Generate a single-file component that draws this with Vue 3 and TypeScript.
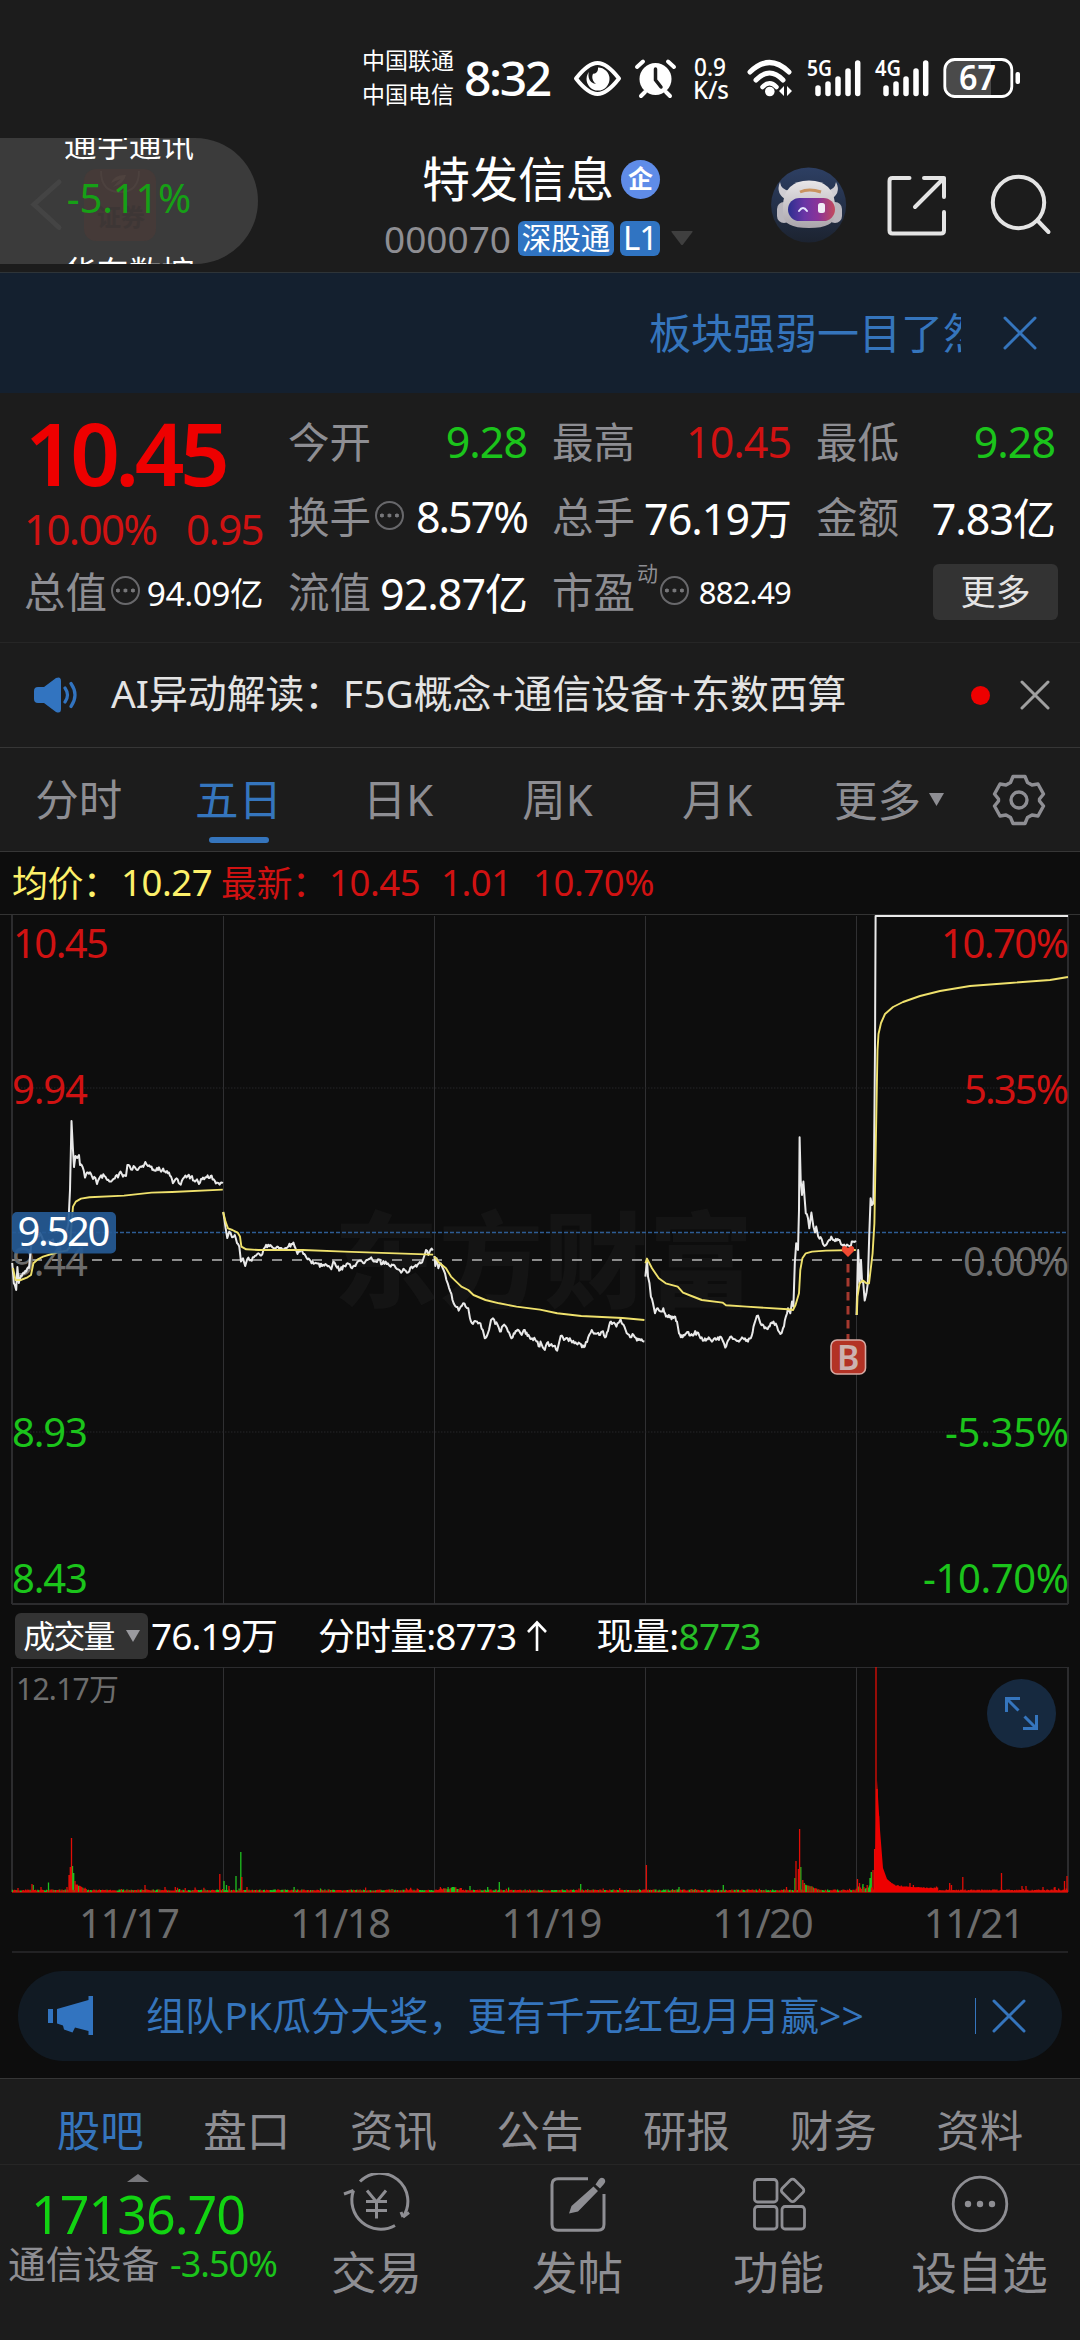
<script setup lang="ts">
type Point = [number, number]

interface Bar {
  x: number
  h: number
  up: boolean
}

const dayEdges = [12, 223.2, 434.4, 645.6, 856.8, 1068]
const days = ['11/17', '11/18', '11/19', '11/20', '11/21']

const periodTabs = ['分时', '五日', '日K', '周K', '月K']
const sectionTabs = ['股吧', '盘口', '资讯', '公告', '研报', '财务', '资料']

/* Small repeatable generator, so that the fine ticks are the same on each load. */
function createNoise(seed: number) {
  let state = seed
  return () => {
    state = (state * 1664525 + 1013904223) % 4294967296
    return state / 4294967296
  }
}

function toPath(points: Point[]): string {
  return points.map(([x, y], i) => `${i ? 'L' : 'M'}${x.toFixed(1)} ${y.toFixed(1)}`).join('')
}

/* Adds minute-level ticks between the recorded turning points. */
function withTicks(points: Point[], seed: number): string {
  const rand = createNoise(seed)
  const out: Point[] = []
  points.forEach((p, i) => {
    out.push(p)
    const next = points[i + 1]
    if (!next) return
    const gap = next[0] - p[0]
    if (gap > 2 && Math.abs(next[1] - p[1]) < 12 && next[0] < 870) {
      const steps = Math.floor(gap / 0.9)
      for (let k = 1; k < steps; k++) {
        const t = k / steps
        out.push([p[0] + gap * t, p[1] + (next[1] - p[1]) * t + (rand() - 0.5) * 4.2])
      }
    }
  })
  return toPath(out)
}

const priceByDay: Point[][] = [
  [[12.2, 1263], [13.8, 1283], [16.2, 1290], [17.4, 1267], [18.8, 1283], [20.7, 1276], [29, 1268], [31, 1247], [32, 1241], [36, 1240], [40, 1233], [43, 1240], [48, 1243], [52, 1240], [56, 1246], [62, 1240], [66, 1235], [68.4, 1224], [70, 1190], [71.5, 1121], [72.8, 1147], [74, 1167], [75.4, 1156], [77.2, 1158], [79, 1155], [80, 1165], [82.6, 1167], [85, 1177.6], [88, 1172.6], [91, 1174], [93, 1179], [95.4, 1178], [97, 1184], [100, 1177], [104.4, 1176], [107.4, 1180], [112, 1180.6], [115.7, 1176], [118, 1177.5], [120.5, 1171.6], [123, 1176.6], [126, 1176], [127.4, 1165], [131, 1169.5], [133.6, 1166], [137.8, 1170], [140.5, 1166.6], [143.3, 1167], [145.3, 1162], [148, 1166], [151.5, 1166.6], [154.3, 1170.6], [157, 1168], [160, 1170], [163.2, 1168.6], [166, 1172.6], [169, 1172.6], [172.9, 1183.3], [175.6, 1179], [180.8, 1184.6], [184.2, 1177.3], [187.7, 1176], [191, 1176.6], [195, 1181.6], [197, 1179.3], [199, 1184], [203, 1177.6], [206.6, 1177.3], [210.7, 1176], [213.5, 1179.3], [217, 1182.6], [219.7, 1184.6], [222.8, 1183.3]],
  [[223.2, 1212], [224.5, 1220], [225.6, 1228], [227.3, 1238], [229.3, 1231.6], [232, 1237.3], [234.8, 1235], [237, 1243], [239.3, 1246.6], [241, 1261.6], [243, 1258.3], [245.2, 1266], [247.2, 1259.3], [250.7, 1260], [254.8, 1256], [258.3, 1253.3], [262.4, 1254], [265, 1247.3], [270.3, 1245], [273.8, 1248.3], [277.2, 1246.6], [282.4, 1249.3], [287.5, 1247.3], [291.3, 1244], [293.4, 1242.6], [295.5, 1248.3], [297.5, 1254], [301, 1250], [304.4, 1254], [307.5, 1259.3], [311.6, 1263.3], [316.8, 1263.3], [322, 1266], [325.4, 1264], [328.9, 1266], [331.3, 1269.3], [333.3, 1261.6], [336, 1266], [340.2, 1270], [344.4, 1266], [347.8, 1263.3], [352, 1268.3], [355.4, 1266], [359.8, 1260.6], [363.3, 1263.3], [368.5, 1259.3], [371.2, 1257.3], [374.6, 1261.6], [378, 1259.3], [382.2, 1264], [385.7, 1261.6], [389.8, 1266], [392.6, 1265], [397.7, 1269.3], [401.2, 1272.6], [404.6, 1270], [408, 1272.6], [411.5, 1266.6], [416.7, 1266.6], [420.8, 1263.3], [423.5, 1258.3], [426, 1250], [428.4, 1255], [430.4, 1250], [432.8, 1250.6]],
  [[434.4, 1256], [435.3, 1266], [436.6, 1258.3], [438.4, 1268.3], [440.8, 1263.3], [442.8, 1268.3], [445, 1273.3], [447.7, 1283.3], [450.4, 1291.6], [452.5, 1300], [455.2, 1306], [458.7, 1310.6], [460.7, 1306.6], [463.2, 1303.3], [465.6, 1306.6], [468.3, 1308.3], [470, 1318.3], [473, 1324], [477, 1321.6], [480.4, 1323.3], [482.8, 1330], [484.8, 1338.3], [487.3, 1335], [489, 1330], [491, 1320], [493, 1318.3], [495.2, 1324], [497.6, 1325], [500, 1331.6], [502.8, 1326], [505.5, 1326], [508, 1331.6], [511.4, 1338.3], [513.8, 1333.3], [518.3, 1330], [521.7, 1335], [524.8, 1330], [527.5, 1336], [532, 1338.3], [535.5, 1340], [539.6, 1346.6], [540.5, 1341.6], [542.8, 1347.3], [544.8, 1350], [546.9, 1343.3], [550.3, 1345], [553.8, 1346], [557.2, 1350.6], [560.7, 1336], [564, 1340], [567.5, 1338.3], [571, 1340.6], [574.4, 1343.3], [578.6, 1342.6], [582, 1347.3], [584.8, 1346.6], [588.2, 1337.3], [591.7, 1330], [595, 1333.3], [599.2, 1335], [602, 1331.6], [606, 1336.6], [608.9, 1326.6], [611, 1321.6], [614, 1322.6], [616.4, 1326.6], [620.6, 1319.3], [624.4, 1326.6], [626.8, 1333.3], [630.2, 1337.3], [633.7, 1335.3], [637, 1340.6], [641.6, 1339.3], [644.4, 1341.6]],
  [[645.4, 1276.6], [647, 1259.3], [648, 1276.6], [649.5, 1283.3], [650.9, 1296.6], [653, 1303.3], [655, 1313.3], [657.8, 1308.3], [661.2, 1311.6], [663.3, 1308.3], [666, 1316.6], [668.8, 1315], [671.5, 1319.3], [674.3, 1316.6], [677, 1321.6], [679, 1333.3], [682.6, 1337.3], [686.3, 1333.3], [691.5, 1334], [697, 1332.6], [700.5, 1338.3], [704, 1340.6], [708.7, 1337.3], [712.9, 1340.6], [717, 1339.3], [721.8, 1338.3], [725.3, 1347.6], [728, 1340.6], [731.5, 1336.6], [735, 1339.3], [739, 1341.6], [743, 1338.3], [748, 1341.6], [750.7, 1338.3], [753.5, 1326.6], [755.6, 1320], [758, 1315.6], [760.4, 1323.3], [764.5, 1328.3], [768.7, 1326.6], [773.5, 1321.6], [777, 1326.6], [780.4, 1334], [783, 1328.3], [785.9, 1316.6], [788, 1308.3], [790.3, 1313.3], [792, 1301.6], [793.4, 1306.6], [794.8, 1263.3], [796.2, 1243.3], [798, 1250], [799, 1210], [799.6, 1137.3], [800.7, 1180], [802, 1195], [803.4, 1181.6], [804.5, 1196.6], [805.8, 1213.3], [808, 1218.3], [809.3, 1228.3], [811.4, 1212.6], [813.4, 1226.6], [815, 1232.6], [816.2, 1226.6], [818.2, 1236.6], [821.7, 1239.3], [824.4, 1246], [827.9, 1241.6], [831.3, 1236.6], [834, 1240], [836.8, 1240.6], [839.6, 1240], [842.3, 1245], [845, 1246.6], [850, 1246], [852.7, 1241.6], [855.8, 1240.6]],
  [[856.5, 1315], [858.2, 1250], [859.6, 1283.3], [861, 1260], [862, 1280], [863.3, 1283.3], [864.7, 1300.6], [866.4, 1293.3], [867.8, 1283.3], [869.2, 1236.6], [870.6, 1198.3], [872, 1205], [873.3, 1203.3], [874, 1160], [875, 1050], [875.6, 916], [1068, 916]],
]

const averageByDay: Point[][] = [
  [[13, 1268], [15.5, 1280], [20.7, 1280], [27.5, 1277.3], [31, 1275], [33.4, 1263.3], [37.9, 1259.3], [43, 1256.6], [51.6, 1254], [60, 1251.6], [67, 1250.6], [70, 1246.6], [71.6, 1223.3], [73, 1206.6], [75.8, 1201.6], [81, 1198.6], [89.5, 1197.3], [124, 1195.6], [151.5, 1192.6], [172, 1192], [222.8, 1189.6]],
  [[223.2, 1212], [225.5, 1221.6], [228, 1228.3], [232.4, 1230], [237.6, 1232.6], [240, 1236.6], [241.4, 1246.6], [246.2, 1249.3], [258.3, 1250], [303, 1250], [344.4, 1251.6], [433.2, 1254.6]],
  [[434.4, 1256.6], [439, 1262.6], [446, 1268.3], [451, 1276.6], [461.4, 1286.6], [468.3, 1290], [473.5, 1295], [485.5, 1300], [499.3, 1303.3], [516.5, 1306.6], [540, 1309.6], [557.2, 1313.3], [581.3, 1316], [622.6, 1318], [644.4, 1320]],
  [[645.4, 1263.3], [647, 1258.6], [652, 1268.3], [658.8, 1278.3], [665.7, 1283.3], [677.7, 1286.6], [683, 1292.6], [691.5, 1296], [701.8, 1300], [722.5, 1302.6], [726, 1305.3], [746.6, 1306.6], [788, 1309.3], [793, 1310], [795.5, 1305], [799, 1293.3], [800.3, 1270], [802.4, 1258.3], [805.8, 1253.3], [812, 1251.6], [825.8, 1250.6], [855.8, 1250]],
  [[856.8, 1315], [857.5, 1296.6], [859.6, 1283.3], [863, 1280.6], [866.4, 1283.3], [869, 1283.3], [870.6, 1270], [872.6, 1253.3], [874.4, 1223.3], [875.7, 1150], [877.5, 1050], [878.5, 1034], [881, 1023], [885, 1014], [893, 1007], [903, 1002], [920, 996], [940, 991], [970, 986], [1010, 983], [1050, 980], [1068, 977]],
]

const pricePaths = priceByDay.map((points, i) => withTicks(points, 17 + i * 31))
const averagePaths = averageByDay.map(toPath)

const volumeBase = 1892

function buildVolume(): Bar[] {
  const rand = createNoise(90210)
  const bars: Bar[] = []
  for (let x = 12.5; x < 1068; x += 1.1) {
    const lastDay = x > 874
    const r = rand()
    let h = 1.5 + (r > 0.93 ? rand() * 3.5 : rand() * 1)
    if (x > 76 && x < 87) h += 6 * (1 - (x - 76) / 11)
    if (x > 436 && x < 462) h += 3.5 * rand()
    if (x > 804 && x < 820) h += 6 * (1 - (x - 804) / 16)
    if (x > 857 && x < 872) h += 6 * rand()
    if (lastDay) h += 18 * Math.exp(-(x - 880) / 8) * (x > 880 ? 1 : 0) + (x < 938 ? 3 * (0.6 + rand() * 0.4) : 0)
    bars.push({ x, h, up: lastDay || rand() > 0.42 })
  }
  const peaks: [number, number, boolean][] = [
    [32, 8, true], [33.2, 7, false], [41, 5, true], [48.5, 9.5, false], [67, 5, true], [69, 17, true], [70.3, 25, true],
    [71.5, 54, true], [72.5, 26, false], [73.7, 19, false], [75, 11, true], [145, 7, true], [165, 5, true],
    [219.8, 18, true], [224, 11, false], [226.5, 7, false], [229, 6, true], [236, 16, false], [240.8, 40, false], [241.8, 15, true],
    [247, 5, true], [470, 6, false], [499.3, 10, false], [580.7, 8, false], [646.4, 27, true], [679, 5, false], [723.3, 7, false],
    [786.5, 5, true], [795, 14, false], [796, 31, true], [798.4, 23, true], [799.6, 63, true], [800.8, 25, false], [802.8, 12, true], [804.3, 9, false],
    [857.5, 13, true], [859.5, 9, true], [863, 8, false], [870, 14, false], [871.3, 20, false], [873, 22, true], [874.6, 43, true], [876, 225, true], [877.2, 103, true],
    [878.6, 76, true], [879.8, 50, true], [881.2, 28, true], [910, 9, true], [949.7, 9, true], [951.5, 7, true], [962.8, 15, true], [1001.5, 19, true],
    [1022, 6, true], [1026, 6, true], [1043, 5, true], [1055, 5, true], [1064.5, 11, true], [1067, 16, true],
  ]
  peaks.forEach(([x, h, up]) => bars.push({ x, h, up }))
  return bars
}

const volume = buildVolume()
const barPath = (up: boolean) =>
  volume.filter((b) => b.up === up).map((b) => `M${b.x.toFixed(1)} ${volumeBase}V${(volumeBase - b.h).toFixed(1)}`).join('')
const risePath = barPath(true)
const fallPath = barPath(false)
</script>

<template>
  <div class="screen">
    <header class="status">
      <div class="carriers"><span>中国联通</span><span>中国电信</span></div>
      <div class="clock">8:32</div>
      <svg class="status-icons" viewBox="560 40 520 76" width="520" height="76">
        <path d="M576 78.5C585 67 591 63 597.500 63S610 67 619 78.500C610 90 604 94 597.500 94S585 90 576 78.500Z" fill="none" stroke="#fff" stroke-width="4" stroke-linejoin="round" />
        <path d="M598 67.500a11.500 11.500 0 1 1-11.500 11.500c0-4 2-7 4-8.500c1 5 8 4 7.500-3Z" fill="#fff" />
        <path d="M596 70c-5 4-5 10 0 14c-8-1-9-10-6-15Z" fill="#1c1c1c" />
        <circle cx="655.500" cy="79" r="16" fill="#fff" />
        <path d="M637 67l6-5.500M674 67l-6-5.500M645 92l-4 4M666 92l4 4" stroke="#fff" stroke-width="4" stroke-linecap="round" />
        <path d="M655.500 69v11l5.500 7" fill="none" stroke="#1c1c1c" stroke-width="3.500" stroke-linecap="round" />
        <text x="694" y="76" textLength="32" lengthAdjust="spacingAndGlyphs" font-size="26" font-weight="500">0.9</text>
        <text x="693" y="98.500" textLength="36" lengthAdjust="spacingAndGlyphs" font-size="25" font-weight="500">K/s</text>
        <g fill="none" stroke="#fff" stroke-width="5" stroke-linecap="round">
          <path d="M750 72Q769.500 53 789 72" />
          <path d="M756 80Q769.500 66 783 80" />
          <path d="M762.500 87Q769.500 79.500 776.500 87" stroke-width="4.500" />
        </g>
        <circle cx="769.800" cy="91.500" r="4.800" fill="#fff" />
        <path d="M784 86v10l-5-5ZM787 86l5 5-5 5Z" fill="#fff" />
        <text x="807" y="76" textLength="25" lengthAdjust="spacingAndGlyphs" font-size="22" font-weight="600">5G</text>
        <text x="875" y="76" textLength="26" lengthAdjust="spacingAndGlyphs" font-size="22" font-weight="600">4G</text>
        <g stroke="#fff" stroke-width="5.500" stroke-linecap="round">
          <path d="M818 88V93.500M828 84V93.500M838 79V93.500M848 71V93.500M857.700 63V93.500" />
          <path d="M886 88V93.500M896 84V93.500M906 79V93.500M916 71V93.500M925.700 63V93.500" />
        </g>
        <path d="M954 61h37v34.500h-37a8 8 0 0 1-8-8V69a8 8 0 0 1 8-8Z" fill="#4a4a4a" />
        <rect x="944.800" y="59.500" width="67" height="37" rx="10" fill="none" stroke="#fff" stroke-width="2.800" />
        <rect x="1015.500" y="72" width="4.500" height="12" rx="2" fill="#fff" />
        <text x="959" y="90" textLength="37" lengthAdjust="spacingAndGlyphs" font-size="34" font-weight="600">67</text>
      </svg>
    </header>

    <nav class="titlebar">
      <div class="pill">
        <svg class="ghost" viewBox="0 138 258 126" width="258" height="126">
          <path d="M59 182L34 204.500L59 227.500" fill="none" stroke="#444" stroke-width="5" stroke-linecap="round" />
          <rect x="84" y="169" width="72" height="72" rx="12" fill="#453a38" />
          <path d="M101 171q0 21 19 21t19-21" fill="none" stroke="#4c413e" stroke-width="2" />
          <path d="M111 183q4-9 15-8q-2 9-13 12q5-6 8-8q-6 2-10 4Z" fill="#4e423e" />
          <text x="97" y="226" font-size="24" font-weight="700" fill="#3d3635">证券</text>
        </svg>
        <div class="ticker">
          <span>通宇通讯</span>
          <span class="ticker-change">-5.11%</span>
          <span>华东数控</span>
        </div>
      </div>
      <div class="stock">
        <div class="name-row">
          <span class="name">特发信息</span><span class="corp">企</span>
        </div>
        <div class="code-row">
          <span class="code">000070</span><span class="tag">深股通</span><span class="tag level">L1</span>
          <svg viewBox="0 0 22 14" width="22" height="14"><path d="M1 0h20q1 0 .5 1L12 13.500q-1 1-2 0L.5 1Q0 0 1 0Z" fill="#3f3f3f" /></svg>
        </div>
      </div>
      <div class="actions">
        <svg viewBox="771 167 76 76" width="76" height="76">
          <defs>
            <linearGradient id="visor" x1="0" x2="1"><stop offset="0" stop-color="#2b2f8f" /><stop offset=".35" stop-color="#6a35a5" /><stop offset=".65" stop-color="#8b3398" /><stop offset="1" stop-color="#c34a5c" /></linearGradient>
            <linearGradient id="disc" x1="0" y1="0" x2="0" y2="1"><stop offset="0" stop-color="#2d3f63" /><stop offset="1" stop-color="#1c2330" /></linearGradient>
            <linearGradient id="helmet" x1="0" y1="0" x2="0" y2="1"><stop offset="0" stop-color="#e8e6e8" /><stop offset="1" stop-color="#aaa5ab" /></linearGradient>
          </defs>
          <circle cx="808.600" cy="205" r="37.500" fill="url(#disc)" />
          <path d="M787 200q-12-6-7-18q1 8 10 9ZM829 200q13-6 7-18q-1 8-10 9Z" fill="#cfcdd2" />
          <rect x="777" y="202" width="14" height="21" rx="7" fill="#b9b6bd" /><rect x="828" y="202" width="14" height="21" rx="7" fill="#b9b6bd" />
          <path d="M783 207q0-26 26-26.500q26 .5 26 26.500v7q0 14-26 14t-26-14Z" fill="url(#helmet)" />
          <rect x="788" y="198" width="47" height="23" rx="11.500" fill="url(#visor)" />
          <path d="M800 192q9-4 21 0" stroke="#c9935f" stroke-width="3" fill="none" />
          <path d="M799 211q4-6 8 0" stroke="#e5e4ff" stroke-width="2" fill="none" stroke-linecap="round" />
          <rect x="818" y="203" width="7" height="10" rx="2.500" fill="#f1ecf6" />
        </svg>
        <svg viewBox="885 175 63 62" width="63" height="62">
          <path d="M909.500 179h-17q-3 0-3 3v49.500q0 3 3 3h48.500q3 0 3-3v-18.500M924 179h20v19M944 179L915 208" fill="none" stroke="#e4e4e4" stroke-width="4" stroke-linecap="round" stroke-linejoin="round" />
        </svg>
        <svg viewBox="989 174 63 63" width="63" height="63">
          <circle cx="1018.500" cy="202.500" r="25.700" fill="none" stroke="#e4e4e4" stroke-width="4" />
          <path d="M1037.500 220.500L1048.500 232" stroke="#e4e4e4" stroke-width="4" stroke-linecap="round" />
        </svg>
      </div>
    </nav>

    <section class="promo">
      <div class="promo-text">板块强弱一目了然</div>
      <svg viewBox="0 0 34 34" width="34" height="34"><path d="M2 2L32 32M32 2L2 32" stroke="#3575bd" stroke-width="3" stroke-linecap="round" /></svg>
    </section>

    <section class="quote">
      <div class="col first">
        <div class="price">10.45</div>
        <div class="delta"><span>10.00%</span><span>0.95</span></div>
        <div class="cell"><label>总值</label><i class="info" /><b class="small">94.09亿</b></div>
      </div>
      <div class="col">
        <div class="cell"><label>今开</label><b class="fall">9.28</b></div>
        <div class="cell"><label>换手</label><i class="info" /><b class="tight">8.57%</b></div>
        <div class="cell"><label>流值</label><b>92.87亿</b></div>
      </div>
      <div class="col">
        <div class="cell"><label>最高</label><b class="rise">10.45</b></div>
        <div class="cell"><label>总手</label><b>76.19万</b></div>
        <div class="cell"><label>市盈</label><sup>动</sup><i class="info" /><b class="smaller">882.49</b></div>
      </div>
      <div class="col">
        <div class="cell"><label>最低</label><b class="fall">9.28</b></div>
        <div class="cell"><label>金额</label><b>7.83亿</b></div>
        <div class="cell end"><button class="more">更多</button></div>
      </div>
    </section>

    <section class="insight">
      <svg viewBox="34 676 44 36" width="44" height="36">
        <path d="M38 686h6l12-9q5-2 5 3v28q0 5-5 3l-12-9h-6q-4 0-4-4v-8q0-4 4-4Z" fill="#3274c0" />
        <path d="M65 687q5 7 0 14M71 682.500q8 11.500 0 23" fill="none" stroke="#3274c0" stroke-width="3.200" stroke-linecap="round" />
      </svg>
      <p>AI异动解读：F5G概念+通信设备+东数西算</p>
      <span class="dot" />
      <svg viewBox="0 0 30 30" width="30" height="30"><path d="M2 2L28 28M28 2L2 28" stroke="#a0a0a0" stroke-width="3" stroke-linecap="round" /></svg>
    </section>

    <nav class="periods">
      <div v-for="tab in periodTabs" :key="tab" class="period" :class="{ active: tab === '五日' }">{{ tab }}</div>
      <div class="period more-period">更多<svg viewBox="0 0 15 13" width="15" height="13"><path d="M0 0h15L7.500 13Z" fill="#8e8e93" /></svg></div>
      <div class="gear">
        <svg viewBox="-27 -27 54 54" width="54" height="54" fill="none" stroke="#8e8e93" stroke-width="3.400" stroke-linejoin="round">
          <path d="M-6 -23.500H6L8.500 -17.500L13 -15L19 -16L24.500 -6L20.500 -1V1L24.500 6L19 16L13 15L8.500 17.500L6 23.500H-6L-8.500 17.500L-13 15L-19 16L-24.500 6L-20.500 1V-1L-24.500 -6L-19 -16L-13 -15L-8.500 -17.500Z" />
          <circle r="8" />
        </svg>
      </div>
    </nav>

    <section class="readout">
      <span class="avg label">均价：</span><span class="avg v0">10.27</span>
      <span class="latest label">最新：</span><span class="latest v1">10.45</span><span class="latest v2">1.01</span><span class="latest">10.70%</span>
    </section>

    <svg class="chart" viewBox="0 914 1080 691" width="1080" height="691">
      <text x="334" y="1300" textLength="419" font-size="104" class="watermark">东方财富</text>
      <path d="M0 914.500H1080" stroke="#333" />
      <path d="M12 1604H1068M12 915V1604M1068 915V1604" stroke="#2c2c2e" stroke-width="2" fill="none" />
      <path v-for="x in dayEdges.slice(1, 5)" :key="x" :d="`M${Math.floor(x) + 0.5} 916V1604`" stroke="#303032" />
      <path d="M12 1088H1068M12 1432H1068" stroke="#262628" stroke-dasharray="1.500 1.500" />
      <path d="M12 1260H1068" stroke="#8c8c8c" stroke-width="2" stroke-dasharray="10 10" />
      <path d="M12 1232.500H1068" stroke="#2d5c94" stroke-width="1.300" stroke-dasharray="4 2" />
      <g class="axis left">
        <text x="13" y="957.500" class="rise" textLength="96">10.45</text>
        <text x="12" y="1103.500" class="rise" textLength="76">9.94</text>
        <text x="12" y="1275.500" class="flat" textLength="76">9.44</text>
        <text x="12" y="1447" class="fall" textLength="76">8.93</text>
        <text x="12" y="1593" class="fall" textLength="76">8.43</text>
      </g>
      <g class="axis right">
        <text x="1069" y="957.500" class="rise" textLength="128">10.70%</text>
        <text x="1069" y="1103.500" class="rise" textLength="105">5.35%</text>
        <text x="1069" y="1275.500" class="flat" textLength="106">0.00%</text>
        <text x="1069" y="1447" class="fall" textLength="124">-5.35%</text>
        <text x="1069" y="1593" class="fall" textLength="146">-10.70%</text>
      </g>
      <path v-for="(d, i) in pricePaths" :key="'p' + i" :d="d" class="line price-line" />
      <path v-for="(d, i) in averagePaths" :key="'a' + i" :d="d" class="line avg-line" />
      <rect x="12" y="1212" width="104" height="41.500" rx="5" fill="#265a95" fill-opacity=".93" />
      <text x="17.500" y="1245.500" textLength="93" font-size="40" fill="#fff">9.520</text>
      <path d="M848 1264V1340" stroke="#a5392f" stroke-width="3" stroke-dasharray="8.500 5.500" />
      <path d="M848 1257l-6-6q-1-5 3-5l3 2l3-2q4 0 3 5Z" fill="#f04a32" />
      <rect x="831" y="1340" width="34.500" height="34" rx="6" fill="#b33225" stroke="#d6aaa4" stroke-width="1.600" />
      <text x="848.200" y="1369.500" text-anchor="middle" font-size="34" font-weight="600" fill="#ccb2b0">B</text>
    </svg>

    <section class="volume-bar">
      <button class="indicator">成交量<svg viewBox="0 0 14 12" width="14" height="12"><path d="M0 0h14L7 12Z" fill="#9a9a9f" /></svg></button>
      <span class="total">76.19万</span>
      <span class="minute">分时量:8773</span>
      <svg viewBox="0 0 22 32" width="22" height="32"><path d="M11 31V3M2 12L11 2.500L20 12" fill="none" stroke="#fff" stroke-width="2.600" /></svg>
      <span class="current">现量:<em>8773</em></span>
    </section>

    <svg class="chart" viewBox="0 1667 1080 287" width="1080" height="287">
      <path d="M12 1667.500H1068" stroke="#2c2c2e" />
      <path d="M12 1667V1892M1068 1667V1892" stroke="#2c2c2e" stroke-width="2" />
      <path v-for="x in dayEdges.slice(1, 5)" :key="x" :d="`M${Math.floor(x) + 0.5} 1667V1892`" stroke="#303032" />
      <path d="M12 1892H1068" stroke="#c01008" stroke-width="1.500" />
      <path :d="fallPath" stroke="#1fc01f" stroke-width="1.300" />
      <path :d="risePath" stroke="#e00d06" stroke-width="1.300" />
      <path d="M875 1892V1860L877 1780L880 1830L883 1868L887 1879L895 1886L920 1887.500L938 1890V1892Z" fill="#ee0000" />
      <text x="16" y="1699.500" textLength="103" font-size="30" class="flat">12.17万</text>
      <text v-for="(day, i) in days" :key="day" :x="(dayEdges[i] ?? 0) + 117.500" y="1938" text-anchor="middle" textLength="101" font-size="40" class="flat">{{ day }}</text>
      <path d="M12 1952H1068" stroke="#222224" stroke-width="2" />
      <circle cx="1021.500" cy="1713.500" r="34.500" fill="#16293f" />
      <path d="M1006.500 1712V1698.500H1020M1007 1699L1018.500 1710.500M1036.500 1715V1728.500H1023M1036 1728L1024.500 1716.500" fill="none" stroke="#3575bd" stroke-width="3" />
    </svg>

    <section class="notice-wrap">
      <div class="notice">
        <svg viewBox="47 1995 47 42" width="47" height="42">
          <path d="M48 2009h5v14h-5ZM57 2009L88.500 2000V1996H93V2035H88.500V2031L75 2027.500L72.500 2032.500L64 2029.500L63 2025.500L57 2023.500Z" fill="#3274c0" />
        </svg>
        <p>组队PK瓜分大奖，更有千元红包月月赢&gt;&gt;</p>
        <span class="bar" />
        <svg viewBox="0 0 34 34" width="34" height="34"><path d="M2 2L32 32M32 2L2 32" stroke="#3575bd" stroke-width="3" stroke-linecap="round" /></svg>
      </div>
    </section>

    <nav class="sections">
      <div v-for="tab in sectionTabs" :key="tab" :class="{ active: tab === '股吧' }">{{ tab }}</div>
    </nav>

    <footer class="bottom">
      <div class="sector">
        <svg viewBox="0 0 22 8" width="22" height="8"><path d="M11 0L22 8H0Z" fill="#77777b" /></svg>
        <div class="index">17136.70</div>
        <div class="sector-row"><span>通信设备</span><em>-3.50%</em></div>
      </div>
      <div class="action">
        <svg viewBox="342 2173 68 62" width="68" height="62" fill="none" stroke="#8e8e93" stroke-width="3">
          <path d="M359 2181.500A28 28 0 0 1 402 2217M343 2194l9.500-3.500" />
          <path d="M352.500 2190.500A29 29 0 0 0 394 2225.500M402 2217l6-4.500M402 2217l-2-5" />
          <path d="M366 2190.500L375.500 2202L385 2190.500M375.500 2202V2218.500M365 2201.500H386M365 2210.500H386" />
        </svg>
        <span>交易</span>
      </div>
      <div class="action">
        <svg viewBox="543 2173 68 62" width="68" height="62">
          <path d="M587 2178.700H557q-6 0-6 6v39.500q0 6 6 6h40q6 0 6-6V2194" fill="none" stroke="#8e8e93" stroke-width="3" />
          <path d="M594.500 2184.500l3-4.500q2.500-3.500 5.500-1.500q2.500 2.500 0 5.500l-4 4.500ZM592.500 2186.500l4.500 4.500L577 2211.500l-9 2l2.500-7.500Z" fill="#8e8e93" />
        </svg>
        <span>发帖</span>
      </div>
      <div class="action">
        <svg viewBox="744 2173 68 62" width="68" height="62" fill="none" stroke="#8e8e93" stroke-width="2.800">
          <rect x="753.500" y="2179.500" width="22.500" height="22.500" rx="3" /><rect x="753.500" y="2206.500" width="22.500" height="22.500" rx="3" /><rect x="781" y="2206.500" width="22.500" height="22.500" rx="3" />
          <rect x="782.800" y="2181.600" width="17.600" height="17.600" rx="3" transform="rotate(45 791.600 2190.400)" />
        </svg>
        <span>功能</span>
      </div>
      <div class="action">
        <svg viewBox="945 2173 68 62" width="68" height="62">
          <circle cx="979" cy="2204" r="26.800" fill="none" stroke="#8e8e93" stroke-width="2.800" />
          <g fill="#8e8e93"><circle cx="967" cy="2204" r="3.200" /><circle cx="979" cy="2204" r="3.200" /><circle cx="991" cy="2204" r="3.200" /></g>
        </svg>
        <span>设自选</span>
      </div>
    </footer>
  </div>
</template>

<style>
body {
  background: #1c1c1c;
}
</style>

<style scoped>
.screen {
  width: 1080px;
  height: 2340px;
  overflow: hidden;
  background: #1c1c1c;
  color: #fff;
  font-family: "Noto Sans", "Noto Sans CJK SC", sans-serif;
  display: flex;
  flex-direction: column;
}
.screen > * { flex: none; box-sizing: border-box; }
svg { display: block; flex: none; }
p { margin: 0; }
em, i { font-style: normal; }
button { border: 0; padding: 0; color: inherit; font-family: inherit; }

.status { height: 138px; display: flex; align-items: flex-start; padding-left: 362px; }
.carriers { width: 93px; display: flex; flex-direction: column; font-size: 23px; line-height: 34px; padding-top: 43px; }
.clock { margin-left: 9px; width: 96px; font-size: 48px; font-weight: 500; line-height: 66px; padding-top: 45px; letter-spacing: -2.400px; }
.status-icons { margin-top: 40px; }
.status-icons text { fill: #fff; }

.titlebar { height: 135px; display: grid; grid-template-columns: 258px 1fr 310px; border-bottom: 1px solid #2e3438; }
.pill { position: relative; height: 126px; border-radius: 0 63px 63px 0; background: #3b3b3b; overflow: hidden; }
.ghost { position: absolute; left: 0; top: 0; }
.ticker { position: relative; display: flex; flex-direction: column; align-items: center; font-size: 32.500px; line-height: 44px; margin: -15px 0 0; }
.ticker-change { color: #16a016; font-size: 40px; line-height: 60px; margin: 1px 0 23px; letter-spacing: -.2px; }
.stock { padding-left: 54px; display: flex; flex-direction: column; align-items: center; }
.name-row { display: flex; align-items: center; gap: 7px; height: 64px; padding-top: 9px; }
.name { font-size: 48px; line-height: 64px; }
.corp { width: 39px; height: 39px; border-radius: 50%; background: #5f8ce8; font-size: 25px; line-height: 36px; font-weight: 700; text-align: center; }
.code-row { display: flex; align-items: center; height: 42px; margin-top: 6px; margin-right: 5px; }
.code { font-size: 37px; color: #8e8e93; margin-right: 7px; }
.tag { box-sizing: border-box; height: 35px; width: 96px; border-radius: 6px; background: #3074c2; font-size: 29.500px; line-height: 33px; text-align: center; }
.level { width: 40px; margin: 0 11px 0 6px; font-size: 33px; letter-spacing: -1px; }
.actions { display: flex; align-items: center; height: 134px; }
.actions svg:nth-child(1) { margin-left: 1px; }
.actions svg:nth-child(2) { margin-left: 38px; }
.actions svg:nth-child(3) { margin-left: 41px; }

.promo { height: 120px; background: #14202f; display: flex; align-items: center; justify-content: flex-end; padding-right: 43px; color: #3575bd; }
.promo-text { width: 312px; overflow: hidden; white-space: nowrap; font-size: 42px; line-height: 60px; margin-right: 42px; }

.quote { height: 250px; border-bottom: 1px solid #262626; display: flex; gap: 26px; padding: 11px 25px 0 25px; }
.col { width: 238px; display: flex; flex-direction: column; }
.cell { height: 75px; display: flex; align-items: center; font-size: 42px; }
.cell.end { justify-content: flex-end; }
label { color: #8e8e93; font-size: 41.500px; white-space: nowrap; margin: -4px 0 0 -1px; }
b { margin-left: auto; font-weight: 400; font-size: 43px; letter-spacing: -1px; white-space: nowrap; }
b.tight { letter-spacing: -2px; }
b.small { font-size: 33.500px; letter-spacing: -.5px; }
b.smaller { font-size: 31px; letter-spacing: -.8px; }
.fall { color: #1bc41b; fill: #1bc41b; }
.rise { color: #d01212; fill: #d01212; }
.flat { fill: #6c6c6c; }
.first .price { height: 97px; line-height: 97px; padding-left: 0; font-size: 87px; font-weight: 600; color: #ee0000; letter-spacing: -4.600px; }
.delta { height: 53px; line-height: 55px; display: flex; justify-content: space-between; font-size: 42px; color: #d01212; letter-spacing: -1.600px; }
.delta span { margin-left: -1px; }
.info {
  width: 25px; height: 25px; border: 2.500px solid #68686b; border-radius: 50%; margin: -3px 0 0 4px;
  background: radial-gradient(circle, #77777a 1.700px, transparent 2.300px) 0 0 / 7.500px 25px repeat-x; background-position-x: 1.200px;
}
sup { color: #8e8e93; font-size: 21px; line-height: 24px; margin: -38px 0 0 2px; }
sup + .info { margin-left: 2px; }
.more { width: 125px; height: 56px; border-radius: 6px; background: #333; color: #e4e4e4; font-size: 35px; line-height: 50px; margin-right: -3px; }

.insight { height: 105px; border-bottom: 1px solid #363636; display: flex; align-items: center; padding: 0 30px 0 34px; }
.insight p { margin: -4px 0 0 33px; font-size: 38.850px; line-height: 60px; color: #e4e4e4; white-space: nowrap; }
.dot { width: 19px; height: 19px; border-radius: 50%; background: #ee0000; margin: 0 30px 0 auto; }

.periods { height: 104px; border-bottom: 1px solid #363636; display: flex; align-items: center; color: #8e8e93; font-size: 43.500px; }
.period { position: relative; width: 159.600px; height: 103px; line-height: 102px; text-align: center; text-indent: -2px; }
.active { color: #3575bd; }
.period.active::after { content: ""; position: absolute; left: 50%; bottom: 8px; width: 60px; margin-left: -30px; height: 6px; border-radius: 3px; background: #3575bd; }
.more-period { width: 182px; display: flex; align-items: center; justify-content: center; gap: 8px; text-indent: 0; }
.gear { flex: 1; display: flex; justify-content: center; padding-right: 21px; }

.readout { height: 62px; background: #0d0d0d; display: flex; align-items: center; padding: 0 0 3px 12px; font-size: 36.500px; letter-spacing: -.4px; white-space: nowrap; }
.label { font-size: 36px; letter-spacing: -.5px; }
.avg { color: #fdf06a; }
.avg.label { width: 109px; }
.v0 { width: 100px; }
.latest { color: #d01212; }
.latest.label { width: 108px; }
.v1 { width: 112px; }
.v2 { width: 92px; }

.chart { background: #0d0d0d; }
.axis { font-size: 40px; }
.right text { text-anchor: end; }
.watermark { font-weight: 900; fill: #141414; }
.line { fill: none; stroke-linejoin: round; }
.price-line { stroke: #e9e9e9; stroke-width: 2; }
.avg-line { stroke: #efe16c; stroke-width: 1.900; }

.volume-bar { height: 62px; background: #0d0d0d; display: flex; align-items: center; padding-left: 15px; font-size: 37px; letter-spacing: -.9px; white-space: nowrap; }
.volume-bar span { margin-top: -4px; }
.indicator { width: 133px; height: 46px; border-radius: 6px; background: #333; display: flex; align-items: center; justify-content: center; gap: 12px; font-size: 32px; line-height: 40px; letter-spacing: -1.800px; }
.total { width: 167px; margin-left: 3px; }
.minute { margin-right: 10px; }
.current { margin-left: 48px; letter-spacing: -.6px; }
.current em { color: #27bd27; }

.notice-wrap { height: 124px; background: #0d0d0d; padding: 17px 18px 0; }
.notice { height: 90px; border-radius: 45px; background: #111a23; display: flex; align-items: center; padding: 0 36px 0 29px; color: #3575bd; }
.notice p { margin: -3px 0 0 52px; font-size: 39.100px; line-height: 60px; white-space: nowrap; }
.bar { width: 1px; height: 36px; background: #3575bd; margin: 0 16px 0 auto; }

.sections { height: 87px; border-top: 1px solid #363636; border-bottom: 1px solid #262626; display: flex; padding: 0 27px; font-size: 43.500px; line-height: 103px; color: #8e8e93; }
.sections div { flex: 1; text-align: center; }

.bottom { height: 175px; display: flex; padding-top: 8px; }
.sector { width: 276px; display: flex; flex-direction: column; align-items: center; padding-top: 1px; box-sizing: border-box; }
.index { font-size: 52px; line-height: 60px; margin-top: 2px; color: #12d312; letter-spacing: -1px; }
.sector-row { width: 269px; display: flex; justify-content: space-between; align-items: center; font-size: 37.800px; line-height: 40px; color: #8e8e93; margin: 0 -1px 0 8px; white-space: nowrap; }
.sector-row em { color: #1bc41b; font-size: 36px; letter-spacing: -1px; }
.action { width: 201.300px; display: flex; flex-direction: column; align-items: center; font-size: 45.500px; line-height: 60px; color: #8e8e93; }
.action span { margin-top: 7px; }
</style>
